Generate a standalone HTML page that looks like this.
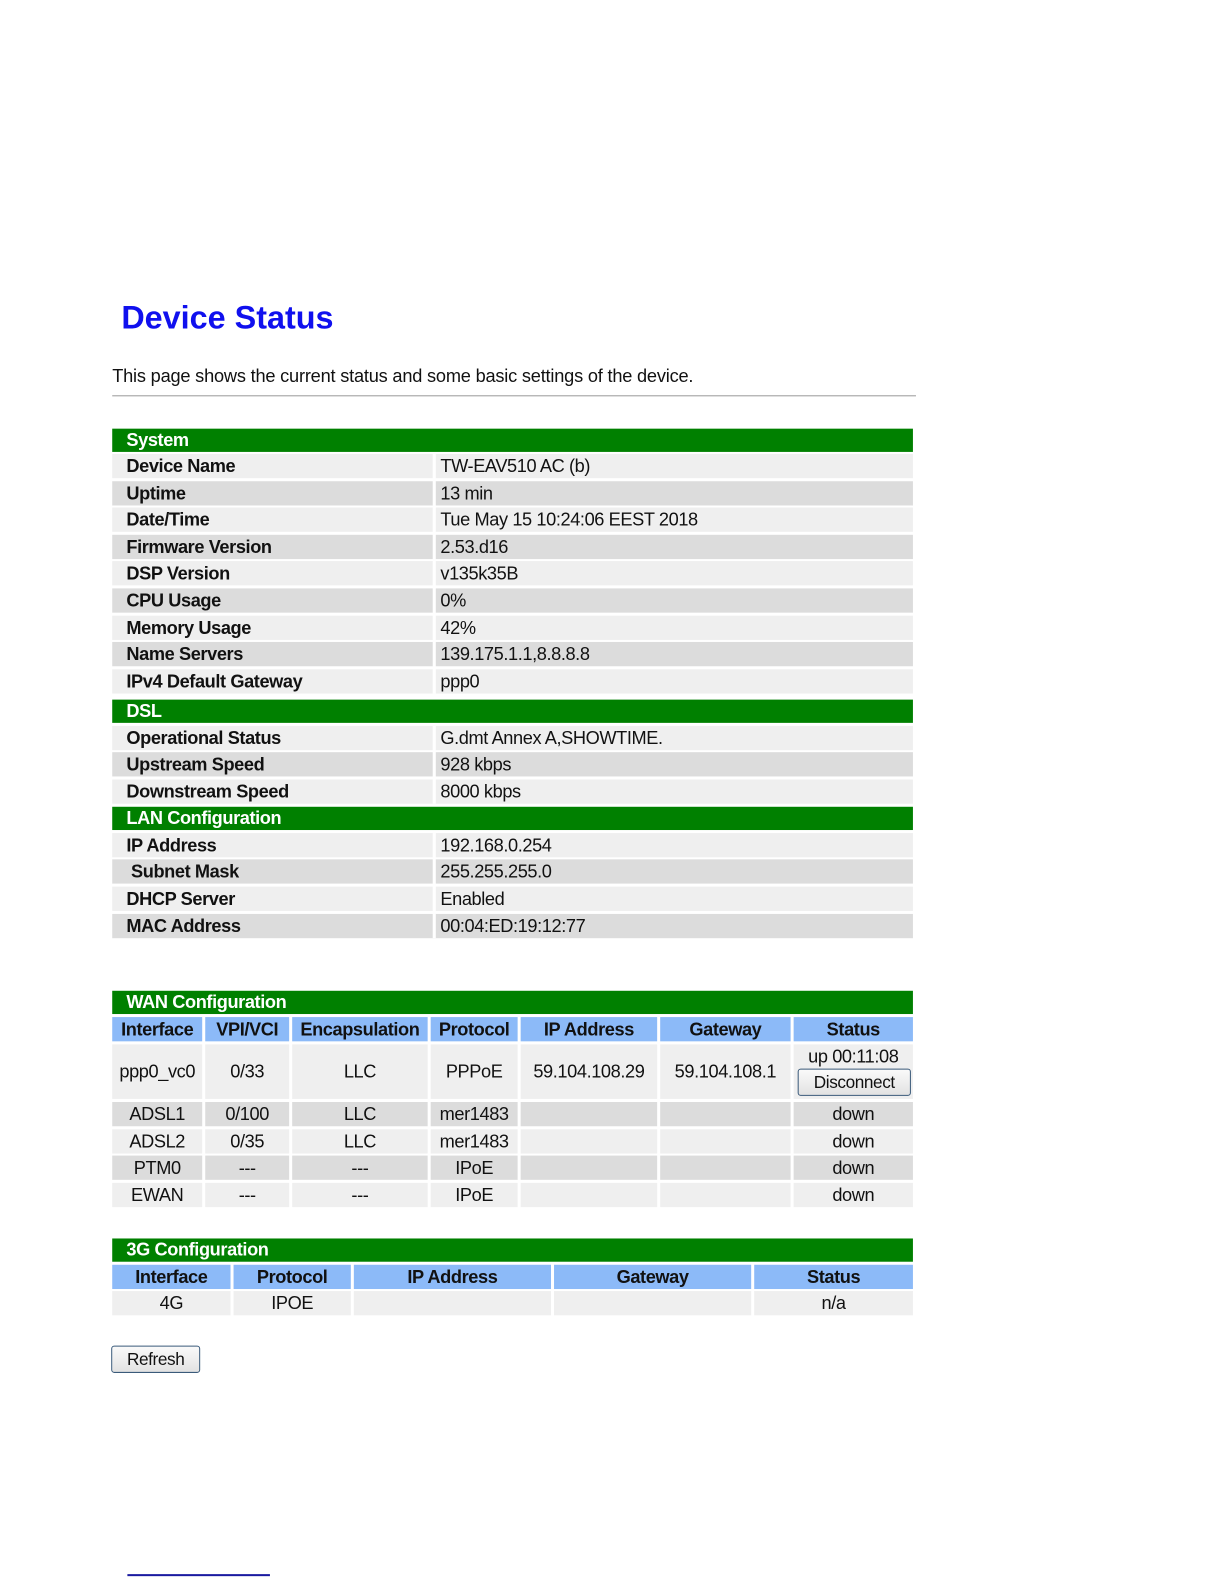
<!DOCTYPE html>
<html style="overflow:hidden"><head><meta charset="utf-8"><style>
html,body{overflow:hidden;}
body{margin:0;width:1224px;height:1584px;background:#fff;position:relative;font-family:"Liberation Sans",Arial,sans-serif;}
#w{position:absolute;left:0;top:0;width:1224px;height:1584px;transform:scale(1.011);transform-origin:0 0;}
.a{position:absolute;white-space:nowrap;box-sizing:border-box;font-size:18px;letter-spacing:-0.4px;color:#111;}
.h{background:#008000;color:#fff;font-weight:bold;height:23px;line-height:23px;padding-left:14px;left:111px;width:792px;}
.l{font-weight:bold;padding-left:14px;height:24px;line-height:24px;}
.v{padding-left:0;height:24px;line-height:24px;}
.L{background:#efefef}.D{background:#dcdcdc}
.c{text-align:center;height:24px;line-height:24px;}
.t{background:#8cbaf8;font-weight:bold;text-align:center;height:24px;line-height:24px;}
.btn{position:absolute;border:1px solid #3a5a7a;border-radius:3px;background:linear-gradient(#fafafa,#e2e2e2);font-size:17px;letter-spacing:-0.4px;text-align:center;box-sizing:border-box;color:#111;}
</style></head><body><div id="w">
<div class="a" style="left:120px;top:296px;font-size:32px;font-weight:bold;color:#1010ee;letter-spacing:0">Device Status</div>
<div class="a" style="left:111px;top:362px;font-size:18px;letter-spacing:-0.2px">This page shows the current status and some basic settings of the device.</div>
<div style="position:absolute;left:111px;top:391px;width:795px;height:1px;background:#999"></div>

<div class="a h" style="top:424px">System</div>
<div class="a l L" style="left:111px;width:320px;top:449px">Device Name</div><div class="a v L" style="left:431px;width:472px;top:449px">&nbsp;TW-EAV510 AC (b)</div>
<div class="a l D" style="left:111px;width:320px;top:476px">Uptime</div><div class="a v D" style="left:431px;width:472px;top:476px">&nbsp;13 min</div>
<div class="a l L" style="left:111px;width:320px;top:502px">Date/Time</div><div class="a v L" style="left:431px;width:472px;top:502px">&nbsp;Tue May 15 10:24:06 EEST 2018</div>
<div class="a l D" style="left:111px;width:320px;top:529px">Firmware Version</div><div class="a v D" style="left:431px;width:472px;top:529px">&nbsp;2.53.d16</div>
<div class="a l L" style="left:111px;width:320px;top:555px">DSP Version</div><div class="a v L" style="left:431px;width:472px;top:555px">&nbsp;v135k35B</div>
<div class="a l D" style="left:111px;width:320px;top:582px">CPU Usage</div><div class="a v D" style="left:431px;width:472px;top:582px">&nbsp;0%</div>
<div class="a l L" style="left:111px;width:320px;top:609px">Memory Usage</div><div class="a v L" style="left:431px;width:472px;top:609px">&nbsp;42%</div>
<div class="a l D" style="left:111px;width:320px;top:635px">Name Servers</div><div class="a v D" style="left:431px;width:472px;top:635px">&nbsp;139.175.1.1,8.8.8.8</div>
<div class="a l L" style="left:111px;width:320px;top:662px">IPv4 Default Gateway</div><div class="a v L" style="left:431px;width:472px;top:662px">&nbsp;ppp0</div>
<div class="a h" style="top:692px">DSL</div>
<div class="a l L" style="left:111px;width:320px;top:718px">Operational Status</div><div class="a v L" style="left:431px;width:472px;top:718px">&nbsp;G.dmt Annex A,SHOWTIME.</div>
<div class="a l D" style="left:111px;width:320px;top:744px">Upstream Speed</div><div class="a v D" style="left:431px;width:472px;top:744px">&nbsp;928 kbps</div>
<div class="a l L" style="left:111px;width:320px;top:771px">Downstream Speed</div><div class="a v L" style="left:431px;width:472px;top:771px">&nbsp;8000 kbps</div>
<div class="a h" style="top:798px">LAN Configuration</div>
<div class="a l L" style="left:111px;width:320px;top:824px">IP Address</div><div class="a v L" style="left:431px;width:472px;top:824px">&nbsp;192.168.0.254</div>
<div class="a l D" style="left:111px;width:320px;top:850px">&nbsp;Subnet Mask</div><div class="a v D" style="left:431px;width:472px;top:850px">&nbsp;255.255.255.0</div>
<div class="a l L" style="left:111px;width:320px;top:877px">DHCP Server</div><div class="a v L" style="left:431px;width:472px;top:877px">&nbsp;Enabled</div>
<div class="a l D" style="left:111px;width:320px;top:904px">MAC Address</div><div class="a v D" style="left:431px;width:472px;top:904px">&nbsp;00:04:ED:19:12:77</div>
<div style="position:absolute;left:428px;top:449px;width:3px;height:237px;background:#fff"></div>
<div style="position:absolute;left:428px;top:718px;width:3px;height:77px;background:#fff"></div>
<div style="position:absolute;left:428px;top:824px;width:3px;height:104px;background:#fff"></div>

<div class="a h" style="top:980px">WAN Configuration</div>
<div class="a t" style="left:111px;width:89px;top:1006px">Interface</div>
<div class="a t" style="left:203px;width:83px;top:1006px">VPI/VCI</div>
<div class="a t" style="left:289px;width:134px;top:1006px">Encapsulation</div>
<div class="a t" style="left:426px;width:86px;top:1006px">Protocol</div>
<div class="a t" style="left:515px;width:135px;top:1006px">IP Address</div>
<div class="a t" style="left:653px;width:129px;top:1006px">Gateway</div>
<div class="a t" style="left:785px;width:118px;top:1006px">Status</div>

<div class="a c L" style="left:111px;width:89px;top:1033px;height:54px;line-height:54px">ppp0_vc0</div>
<div class="a c L" style="left:203px;width:83px;top:1033px;height:54px;line-height:54px">0/33</div>
<div class="a c L" style="left:289px;width:134px;top:1033px;height:54px;line-height:54px">LLC</div>
<div class="a c L" style="left:426px;width:86px;top:1033px;height:54px;line-height:54px">PPPoE</div>
<div class="a c L" style="left:515px;width:135px;top:1033px;height:54px;line-height:54px">59.104.108.29</div>
<div class="a c L" style="left:653px;width:129px;top:1033px;height:54px;line-height:54px">59.104.108.1</div>
<div class="a c L" style="left:785px;width:118px;top:1033px;height:54px;line-height:24px">up 00:11:08</div>
<div class="btn" style="left:789px;top:1057px;width:112px;height:27px;line-height:25px">Disconnect</div>

<div class="a c D" style="left:111px;width:89px;top:1090px">ADSL1</div><div class="a c D" style="left:203px;width:83px;top:1090px">0/100</div><div class="a c D" style="left:289px;width:134px;top:1090px">LLC</div><div class="a c D" style="left:426px;width:86px;top:1090px">mer1483</div><div class="a c D" style="left:515px;width:135px;top:1090px"></div><div class="a c D" style="left:653px;width:129px;top:1090px"></div><div class="a c D" style="left:785px;width:118px;top:1090px">down</div>
<div class="a c L" style="left:111px;width:89px;top:1117px">ADSL2</div><div class="a c L" style="left:203px;width:83px;top:1117px">0/35</div><div class="a c L" style="left:289px;width:134px;top:1117px">LLC</div><div class="a c L" style="left:426px;width:86px;top:1117px">mer1483</div><div class="a c L" style="left:515px;width:135px;top:1117px"></div><div class="a c L" style="left:653px;width:129px;top:1117px"></div><div class="a c L" style="left:785px;width:118px;top:1117px">down</div>
<div class="a c D" style="left:111px;width:89px;top:1143px">PTM0</div><div class="a c D" style="left:203px;width:83px;top:1143px">---</div><div class="a c D" style="left:289px;width:134px;top:1143px">---</div><div class="a c D" style="left:426px;width:86px;top:1143px">IPoE</div><div class="a c D" style="left:515px;width:135px;top:1143px"></div><div class="a c D" style="left:653px;width:129px;top:1143px"></div><div class="a c D" style="left:785px;width:118px;top:1143px">down</div>
<div class="a c L" style="left:111px;width:89px;top:1170px">EWAN</div><div class="a c L" style="left:203px;width:83px;top:1170px">---</div><div class="a c L" style="left:289px;width:134px;top:1170px">---</div><div class="a c L" style="left:426px;width:86px;top:1170px">IPoE</div><div class="a c L" style="left:515px;width:135px;top:1170px"></div><div class="a c L" style="left:653px;width:129px;top:1170px"></div><div class="a c L" style="left:785px;width:118px;top:1170px">down</div>

<div class="a h" style="top:1225px">3G Configuration</div>
<div class="a t" style="left:111px;width:117px;top:1251px">Interface</div>
<div class="a t" style="left:231px;width:116px;top:1251px">Protocol</div>
<div class="a t" style="left:350px;width:195px;top:1251px">IP Address</div>
<div class="a t" style="left:548px;width:195px;top:1251px">Gateway</div>
<div class="a t" style="left:746px;width:157px;top:1251px">Status</div>
<div class="a c L" style="left:111px;width:117px;top:1277px">4G</div>
<div class="a c L" style="left:231px;width:116px;top:1277px">IPOE</div>
<div class="a c L" style="left:350px;width:195px;top:1277px"></div>
<div class="a c L" style="left:548px;width:195px;top:1277px"></div>
<div class="a c L" style="left:746px;width:157px;top:1277px">n/a</div>

<div class="btn" style="left:110px;top:1331px;width:88px;height:27px;line-height:25px">Refresh</div>
<div style="position:absolute;left:126px;top:1557px;width:141px;height:2px;background:#1a1aa0"></div>
</div></body></html>
